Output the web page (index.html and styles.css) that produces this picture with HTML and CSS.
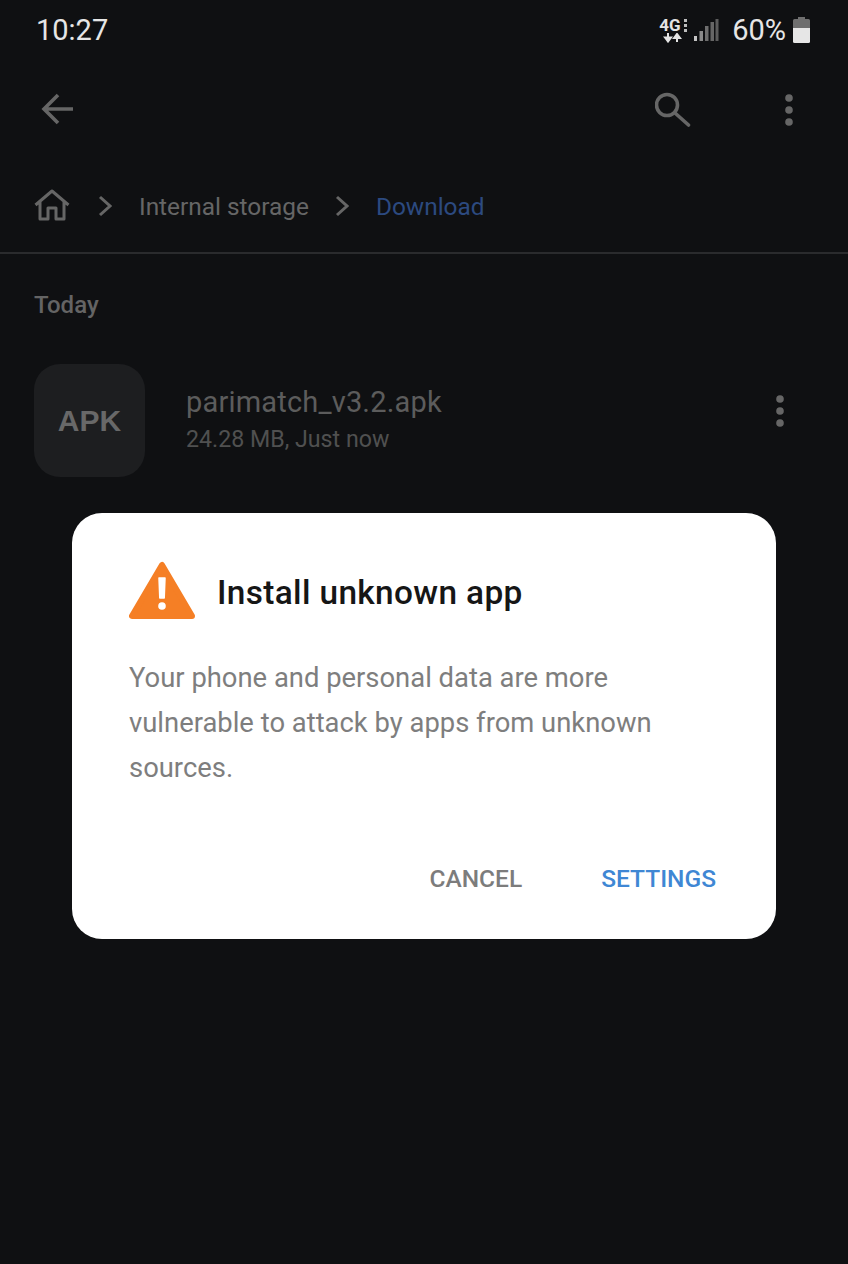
FILE: index.html
```html
<!DOCTYPE html>
<html lang="en">
<head>
<meta charset="utf-8">
<title>Install unknown app</title>
<link rel="stylesheet" href="styles.css">
</head>
<body>
<div class="screen">
  <header class="status">
    <span class="time">10:27</span>
    <div class="status-right">
      <div class="net">
        <span class="net-label">4G</span>
        <svg class="net-dots" width="3" height="13" viewBox="0 0 3 13"><path d="M0 0h3v3H0zM0 5h3v3H0zM0 10h3v3H0z" fill="#bdbdbd"/></svg>
        <svg class="net-arrows" width="20" height="10" viewBox="0 0 20 10"><path d="M5 0v5M2 4.500l3 4 3-4z" stroke="#e4e4e4" stroke-width="2" fill="#e4e4e4"/><path d="M14 9V4M11 5l3-4 3 4z" stroke="#e4e4e4" stroke-width="2" fill="#e4e4e4"/></svg>
      </div>
      <svg class="signal" width="26" height="24" viewBox="0 0 26 24"><rect x="1" y="18" width="3" height="5" fill="#c4c4c4"/><rect x="6.500" y="13" width="3.500" height="10" fill="#8a8a8a"/><rect x="12" y="8" width="3.500" height="15" fill="#6e6e6e"/><rect x="17.500" y="4" width="3.500" height="19" fill="#666"/><rect x="22.500" y="1" width="3" height="22" fill="#5c5c5c"/></svg>
      <span class="pct">60%</span>
      <svg class="battery" width="17" height="26" viewBox="0 0 17 26"><path d="M5 0h7v2h3.500q1.500 0 1.500 1.500V11H0V3.500Q0 2 1.500 2H5z" fill="#6f6f6f"/><path d="M0 11h17v13.500q0 1.500-1.500 1.500h-14Q0 26 0 24.500z" fill="#e6e6e6"/></svg>
    </div>
  </header>

  <nav class="toolbar">
    <svg width="34" height="34" viewBox="0 0 34 34" fill="none" stroke="#666" stroke-width="3.600"><path d="M33 17H4M18 3 4 17l14 14"/></svg>
    <div class="toolbar-actions">
      <svg width="36" height="36" viewBox="0 0 36 36" fill="none" stroke="#666" stroke-width="3.600"><circle cx="12" cy="14" r="10.500"/><path d="m20 22 13.500 12" stroke-linecap="round"/></svg>
      <svg class="dots" width="8" height="32" viewBox="0 0 8 32" fill="#666"><circle cx="4" cy="4" r="3.800"/><circle cx="4" cy="16" r="3.800"/><circle cx="4" cy="28" r="3.800"/></svg>
    </div>
  </nav>

  <div class="crumbs">
    <svg width="36" height="32" viewBox="0 0 36 32" fill="none" stroke="#666" stroke-width="3" stroke-linejoin="round"><path d="M1.500 16 18 2l16.500 14M6 12.500V30h8V19h8v11h8V12.500"/></svg>
    <svg class="chev chev-first" width="14" height="22" viewBox="0 0 14 22" fill="none" stroke="#666" stroke-width="3"><path d="m2 2 10 9-10 9"/></svg>
    <span class="crumb">Internal storage</span>
    <svg class="chev chev-second" width="14" height="22" viewBox="0 0 14 22" fill="none" stroke="#666" stroke-width="3"><path d="m2 2 10 9-10 9"/></svg>
    <span class="crumb crumb-active">Download</span>
  </div>

  <main class="content">
    <h2 class="section">Today</h2>
    <div class="file">
      <div class="file-icon">APK</div>
      <div class="file-info">
        <span class="file-name">parimatch_v3.2.apk</span>
        <span class="file-meta">24.28 MB, Just now</span>
      </div>
      <svg class="file-more" width="8" height="32" viewBox="0 0 8 32" fill="#666"><circle cx="4" cy="4" r="3.800"/><circle cx="4" cy="16" r="3.800"/><circle cx="4" cy="28" r="3.800"/></svg>
    </div>
  </main>

  <div class="dialog">
    <div class="dialog-title">
      <svg width="66" height="58" viewBox="0 0 66 58"><path d="M33 4 3 55h60z" fill="#f57f25" stroke="#f57f25" stroke-width="6" stroke-linejoin="round"/><path d="M30 17h6l-.8 20h-4.400z" fill="#fff" stroke="#fff" stroke-width="1.500" stroke-linejoin="round"/><circle cx="33" cy="45" r="3.800" fill="#fff"/></svg>
      <h1>Install unknown app</h1>
    </div>
    <p class="dialog-body">Your phone and personal data are more vulnerable to attack by apps from unknown sources.</p>
    <div class="dialog-actions">
      <span class="btn btn-cancel">CANCEL</span>
      <span class="btn btn-settings">SETTINGS</span>
    </div>
  </div>
</div>
</body>
</html>
```

FILE: styles.css
```css
* { box-sizing: border-box; }
html, body { margin: 0; padding: 0; }
body { background: #0f1012; font-family: Roboto, "Liberation Sans", sans-serif; }

.screen {
  position: relative;
  width: 848px;
  height: 1264px;
  overflow: hidden;
  background: #0f1012;
}

.status {
  display: flex;
  align-items: center;
  justify-content: space-between;
  height: 60px;
  padding: 0 38px 0 36px;
}
.time { font-size: 29px; color: #e6e6e6; }
.status-right { display: flex; align-items: center; }
.net {
  display: grid;
  grid-template-columns: auto auto;
  column-gap: 1px;
  width: 30px;
  margin-right: 5px;
  justify-items: center;
  align-items: center;
}
.net-label { font-size: 17px; line-height: 16px; font-weight: 700; color: #e4e4e4; }
.net-arrows { grid-column: 1 / 3; }
.signal { margin-right: 13px; }
.pct { font-size: 29px; color: #e6e6e6; margin-right: 7px; }

.toolbar {
  display: flex;
  align-items: center;
  justify-content: space-between;
  height: 98px;
  padding: 0 55px 0 40px;
}
.toolbar-actions { display: flex; align-items: center; gap: 94px; }
.dots { margin-top: 2px; }

.crumbs {
  display: flex;
  align-items: center;
  height: 96px;
  padding-left: 34px;
  border-bottom: 2px solid #2a2b2d;
}
.crumb { font-size: 24.400px; color: #666; padding-top: 2px; }
.crumb-active { color: #2c4a80; }
.chev { margin-top: 2px; }
.chev-first { margin-left: 28px; margin-right: 27px; }
.chev-second { margin-left: 26px; margin-right: 27px; }

.content { padding: 0 34px; }
.section {
  margin: 0;
  padding-top: 36px;
  font-size: 24px;
  line-height: 30px;
  font-weight: 500;
  color: #646464;
}
.file { display: flex; align-items: center; margin-top: 44px; }
.file-icon {
  display: flex;
  align-items: center;
  justify-content: center;
  width: 111px;
  height: 113px;
  border-radius: 26px;
  background: #1d1e20;
  font-family: "Liberation Sans", Arial, sans-serif;
  font-size: 30px;
  font-weight: 700;
  color: #686868;
}
.file-info { display: flex; flex-direction: column; margin-left: 41px; flex: 1; }
.file-name { font-size: 29px; line-height: 36px; color: #5c5c5c; letter-spacing: 0.180px; }
.file-meta { font-size: 23.200px; line-height: 38px; color: #505050; }
.file-more { margin-right: 30px; margin-bottom: 20px; }

.dialog {
  position: absolute;
  left: 72px;
  top: 513px;
  width: 704px;
  height: 426px;
  padding: 48px 60px 0 57px;
  background: #fff;
  border-radius: 30px;
}
.dialog-title { display: flex; align-items: center; gap: 22px; }
.dialog-title h1 {
  margin: 0;
  padding-top: 4px;
  font-size: 33.400px;
  font-weight: 500;
  color: #161616;
  letter-spacing: 0.350px;
}
.dialog-body {
  margin: 37px 0 0;
  font-size: 27.400px;
  line-height: 45px;
  color: #7e7e7e;
}
.dialog-actions {
  display: flex;
  justify-content: flex-end;
  gap: 79px;
  margin-top: 73px;
}
.btn { font-size: 24.500px; font-weight: 500; line-height: 30px; }
.btn-cancel { color: #7c7c7c; }
.btn-settings { color: #3f87d4; }
```
